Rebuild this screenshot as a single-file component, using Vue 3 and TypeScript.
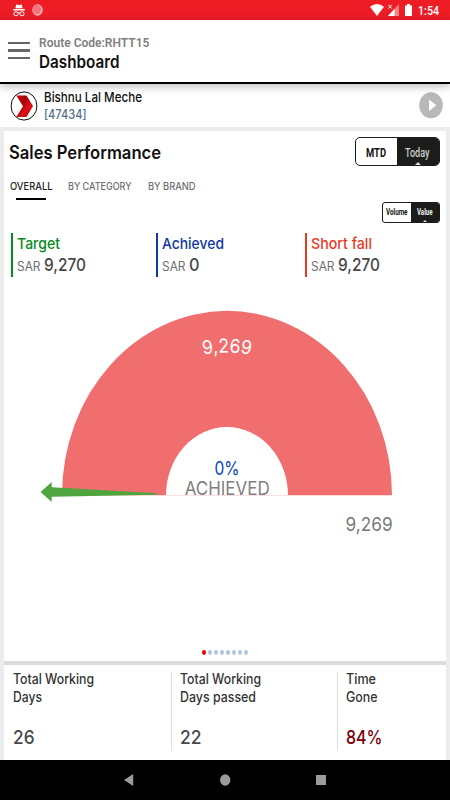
<script setup lang="ts">
import { h } from 'vue'
import type { FunctionalComponent } from 'vue'

interface FitProps {
  text: string
  w: number
  size: number
  rise: number
}

// One line of text set to an exact width; the box ends on the baseline.
const Fit: FunctionalComponent<FitProps> = (p) =>
  h('svg', { width: p.w, height: p.rise, style: { display: 'block', overflow: 'visible', flex: 'none' } }, [
    h('text', {
      x: 0,
      y: p.rise,
      'font-size': p.size,
      fill: 'currentColor',
      textLength: p.w,
      lengthAdjust: 'spacingAndGlyphs',
    }, p.text),
  ])
Fit.props = ['text', 'w', 'size', 'rise']

const tabs = [
  { label: 'OVERALL', w: 42.5, active: true },
  { label: 'BY CATEGORY', w: 63.5, active: false },
  { label: 'BY BRAND', w: 47.5, active: false },
]

const metrics = [
  { label: 'Target', lw: 43, value: '9,270', vw: 42, tone: 'green' },
  { label: 'Achieved', lw: 62, value: '0', vw: 10.5, tone: 'blue' },
  { label: 'Short fall', lw: 61, value: '9,270', vw: 42, tone: 'red' },
]

const stats = [
  { a: 'Total Working', aw: 81, b: 'Days', bw: 29, value: '26', vw: 21.5, alert: false },
  { a: 'Total Working', aw: 81, b: 'Days passed', bw: 76, value: '22', vw: 21.5, alert: false },
  { a: 'Time', aw: 30, b: 'Gone', bw: 31.5, value: '84%', vw: 36.5, alert: true },
]
</script>

<template>
  <div class="screen">
    <header class="status">
      <svg class="incognito" width="12" height="13" viewBox="0 0 12 13">
        <path d="M3.2 0.4 6 .9 8.8.4 9.6 4.2H2.4ZM.2 5H11.8V6.4H.2Z" fill="#fff" />
        <ellipse cx="3" cy="9.7" rx="2.1" ry="2.1" fill="none" stroke="#fff" />
        <ellipse cx="9" cy="9.7" rx="2.1" ry="2.1" fill="none" stroke="#fff" />
        <path d="M5 9.2Q6 8.5 7 9.2" fill="none" stroke="#fff" />
      </svg>
      <svg class="blob" width="11" height="12" viewBox="0 0 11 12">
        <ellipse cx="5.5" cy="6" rx="5.2" ry="5.7" fill="#fbb5b8" />
        <ellipse cx="5" cy="5.6" rx="4.1" ry="4.5" fill="#f5747b" />
      </svg>
      <span class="grow"></span>
      <svg class="wifi" width="14" height="12" viewBox="0 0 14 12">
        <path d="M0 2.8Q7-2.8 14 2.8L7 12Z" fill="#fff" />
      </svg>
      <svg class="signal" width="11" height="12" viewBox="0 0 11 12">
        <path d="M0 12 11 0V12Z" fill="#f78389" />
        <path d="M0 12 6.6 4.8V12Z" fill="#fff" />
        <path d="M.4.8 3.8 4.6M3.8.8.4 4.6" stroke="#fff" fill="none" />
      </svg>
      <svg class="battery" width="7" height="12" viewBox="0 0 7 12">
        <path d="M2 0H5V1.5H7V12H0V1.5H2Z" fill="#fff" />
      </svg>
      <Fit class="clock" text="1:54" :w="21" :size="13" :rise="11" />
    </header>

    <div class="appbar">
      <div class="menu"><i></i><i></i><i></i></div>
      <div class="titles">
        <Fit class="route" text="Route Code:RHTT15" :w="110.5" :size="13.7" :rise="11" />
        <Fit class="title" text="Dashboard" :w="80.5" :size="17.3" :rise="14" />
      </div>
    </div>

    <div class="user">
      <svg width="28" height="30" viewBox="0 0 28 30">
        <defs>
          <linearGradient id="chev" x1="0" y1="0" x2="1" y2="1">
            <stop offset="0" stop-color="#c80008" />
            <stop offset=".35" stop-color="#a80008" />
            <stop offset=".65" stop-color="#e01018" />
            <stop offset="1" stop-color="#8a0508" />
          </linearGradient>
        </defs>
        <ellipse cx="14" cy="15" rx="12.9" ry="14.1" fill="#fff" stroke="#111" />
        <path d="M6.3 4.6H16.5L23 15 16.5 26H6.3L13 15.3Z" fill="url(#chev)" />
      </svg>
      <div class="who">
        <Fit class="name" text="Bishnu Lal Meche" :w="98" :size="13.4" :rise="11" />
        <Fit class="code" text="[47434]" :w="42.5" :size="12.7" :rise="11" />
      </div>
      <span class="grow"></span>
      <svg width="24" height="27" viewBox="0 0 24 27">
        <ellipse cx="12" cy="13.3" rx="11.8" ry="13" fill="#b8b8b8" />
        <path d="M10 7.6V19.1L17.3 13.3Z" fill="#fff" />
      </svg>
    </div>

    <main class="card">
      <div class="head">
        <Fit class="heading" text="Sales Performance" :w="152" :size="18.4" :rise="16" />
        <div class="toggle big">
          <div class="opt"><Fit text="MTD" :w="20" :size="13.2" :rise="10" /></div>
          <div class="opt on"><Fit text="Today" :w="24.5" :size="12.7" :rise="10" /></div>
        </div>
      </div>

      <nav class="tabs">
        <div v-for="t in tabs" :key="t.label" class="tab" :class="{ active: t.active }">
          <Fit :text="t.label" :w="t.w" :size="10.8" :rise="9" />
        </div>
      </nav>

      <div class="toggle small">
        <div class="opt"><Fit text="Volume" :w="21.5" :size="8.2" :rise="6" /></div>
        <div class="opt on"><Fit text="Value" :w="15.5" :size="8.4" :rise="6" /></div>
      </div>

      <section class="metrics">
        <div v-for="m in metrics" :key="m.label" class="metric" :class="m.tone">
          <Fit class="mlabel" :text="m.label" :w="m.lw" :size="15.2" :rise="13" />
          <div class="amount">
            <Fit class="cur" text="SAR" :w="23.5" :size="12.8" :rise="15" />
            <Fit class="num" :text="m.value" :w="m.vw" :size="17.6" :rise="15" />
          </div>
        </div>
      </section>

      <svg class="gauge" width="442" height="360" viewBox="4 285 442 360">
        <defs><path id="arc" d="M99 495.5A128 143 0 0 1 355 495.5" /></defs>
        <path d="M166 495.5H288" stroke="#fbdede" stroke-width="1" />
        <path d="M62 495.3A165 184.5 0 0 1 392 495.3H288A61 68.4 0 0 0 166 495.3Z" fill="#f06e6e" />
        <path d="M40.5 492 51.7 482V487.2L157 493.2V494.8L51.7 496.8V502Z" fill="#4fa53e" />
        <text class="lbl white" font-size="19" text-anchor="middle"><textPath href="#arc" startOffset="50%" textLength="48" lengthAdjust="spacingAndGlyphs">9,269</textPath></text>
        <text class="lbl blue" x="214.5" y="475.2" font-size="18.7" textLength="25" lengthAdjust="spacingAndGlyphs">0%</text>
        <text class="lbl gray" x="184.7" y="495.3" font-size="19.2" textLength="85" lengthAdjust="spacingAndGlyphs">ACHIEVED</text>
        <text class="lbl dark" x="345.6" y="531" font-size="18.7" textLength="47" lengthAdjust="spacingAndGlyphs">9,269</text>
      </svg>

      <div class="dots"><i v-for="n in 8" :key="n" :class="{ current: n === 1 }"></i></div>

      <section class="stats">
        <div v-for="(s, i) in stats" :key="i" class="stat">
          <Fit class="sl" :text="s.a" :w="s.aw" :size="14" :rise="12" />
          <Fit class="sl second" :text="s.b" :w="s.bw" :size="14" :rise="12" />
          <Fit class="sv" :class="{ alert: s.alert }" :text="s.value" :w="s.vw" :size="18.7" :rise="16" />
        </div>
      </section>
    </main>

    <footer class="sysnav">
      <svg width="10" height="12" viewBox="0 0 10 12"><path d="M0 6 9.2.1V11.9Z" fill="#9b9b9b" /></svg>
      <svg width="11" height="12" viewBox="0 0 11 12"><ellipse cx="5.2" cy="6" rx="5.2" ry="5.7" fill="#9b9b9b" /></svg>
      <svg width="10" height="10" viewBox="0 0 10 10"><path d="M0 0H10V10H0Z" fill="#9b9b9b" /></svg>
    </footer>
  </div>
</template>

<style scoped>
.screen {
  width: 450px;
  height: 800px;
  display: flex;
  flex-direction: column;
  background: #ececec;
  font-family: Inter, "Liberation Sans", sans-serif;
  overflow: hidden;
}
.grow { flex: 1; }
.status {
  height: 20px;
  flex: none;
  display: flex;
  align-items: flex-start;
  box-sizing: border-box;
  padding: 4px 11.5px 0 13px;
  background: #ee1c25;
  color: #fff;
}
.incognito { margin: 0 7px 0 0; }
.signal { margin: 0 6px 0 4px; }
.battery { margin-right: 6px; }
.clock { font-family: Roboto, sans-serif; font-weight: 500; }
.appbar {
  height: 64px;
  flex: none;
  box-sizing: border-box;
  display: flex;
  padding: 15.7px 0 0 7.5px;
  background: #fff;
  border-bottom: 2px solid #000;
  box-shadow: 0 2px 9px rgba(0, 0, 0, .28);
  z-index: 1;
}
.menu { width: 22px; padding-top: 6.3px; display: flex; flex-direction: column; gap: 5px; }
.menu i { height: 2.5px; flex: none; background: #666; }
.titles { padding-left: 9px; }
.route { font-family: Roboto, sans-serif; font-weight: 600; color: #808080; }
.title { margin-top: 7px; font-weight: 600; color: #111; }
.user {
  height: 43px;
  flex: none;
  display: flex;
  align-items: center;
  box-sizing: border-box;
  padding: 0 7.5px 0 10.3px;
  background: #fff;
}
.who { padding: 0 0 2px 6.2px; }
.name { color: #111; font-weight: 500; }
.code { margin-top: 6px; color: #566f8a; font-weight: 500; }
.card {
  margin: 4px 4px 0;
  height: 629px;
  flex: none;
  background: #fff;
  display: flex;
  flex-direction: column;
}
.head {
  height: 42px;
  flex: none;
  box-sizing: border-box;
  display: flex;
  justify-content: space-between;
  padding: 6px 6px 0 5px;
}
.heading { margin-top: 6px; font-weight: 600; color: #111; }
.toggle {
  display: flex;
  box-sizing: border-box;
  background: #fff;
  border: 1px solid #1c1c1c;
  font-family: Roboto, sans-serif;
  overflow: hidden;
  flex: none;
}
.opt { display: flex; justify-content: center; flex: 1; color: #111; }
.on { background: #1c1c1a; color: #ccc; position: relative; }
.on::after {
  content: "";
  position: absolute;
  bottom: 0;
  left: 50%;
  margin-left: -3px;
  border: 3px solid transparent;
  border-top: 0;
  border-bottom-color: #ddd;
}
.big { width: 85px; height: 29px; border-radius: 5px; font-weight: 700; }
.big .opt { padding-top: 8.5px; }
.big .on { font-weight: 500; padding-right: 2px; }
.small { width: 58px; height: 20.5px; border-radius: 3px; font-weight: 700; margin: 1px 6px 0 auto; }
.small .opt { padding-top: 6.3px; }
.small .on { color: #eee; }
.small .on::after { bottom: -1px; }
.tabs {
  display: flex;
  gap: 16px;
  padding: 8px 0 0 5.5px;
  height: 28px;
  box-sizing: border-box;
  flex: none;
}
.tab { display: flex; flex-direction: column; align-items: center; color: #707070; font-weight: 500; }
.tab.active { color: #222; }
.tab.active::after { content: ""; width: 30px; height: 2.5px; margin-top: 7.5px; background: #000; }
.metrics {
  display: grid;
  grid-template-columns: 145.3px 148.7px 1fr;
  padding: 10px 0 0 7px;
  height: 44px;
  flex: none;
}
.metric { border-left: 2.5px solid; padding: 3px 0 0 4px; height: 41px; }
.mlabel { font-weight: 500; }
.green { color: #078a1d; }
.blue { color: #1237a0; }
.red { color: #e8391f; }
.amount { display: flex; gap: 3.5px; padding-top: 7.5px; }
.cur { color: #707070; }
.num { color: #484848; font-weight: 500; }
.gauge { display: block; flex: none; margin-top: 8.5px; }
.lbl { font-family: Inter, sans-serif; }
.lbl.white { fill: #fff; }
.lbl.blue { fill: #0846b0; }
.lbl.gray { fill: #808080; }
.lbl.dark { fill: #777; }
.dots { display: flex; gap: 1.6px; margin: 5px 0 0 197.8px; height: 5.4px; }
.dots i { width: 4.4px; height: 5.4px; border-radius: 50%; background: #b0c4de; }
.dots i.current { background: #e8000c; }
.stats {
  margin-top: auto;
  height: 99px;
  flex: none;
  box-sizing: border-box;
  border-top: 4px solid #dcdcdc;
  display: grid;
  grid-template-columns: 166.5px 166px 1fr;
}
.stat { margin-top: 7px; height: 79px; padding-left: 8px; border-left: 1px solid #dedede; }
.stat:first-child { border-color: transparent; }
.sl { color: #333; font-weight: 500; }
.second { margin-top: 6px; }
.sv { margin-top: 26px; color: #484848; font-weight: 500; }
.sv.alert { color: #7c0008; }
.sysnav {
  height: 40px;
  flex: none;
  background: #000;
  display: flex;
  align-items: center;
  justify-content: center;
  gap: 85.7px;
}
</style>
